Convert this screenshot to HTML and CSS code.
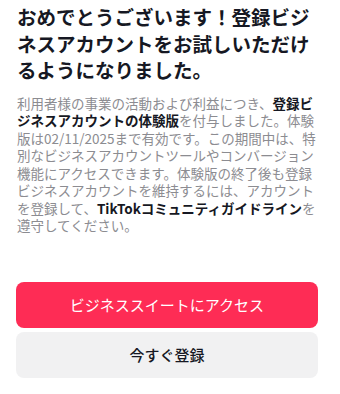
FILE: index.html
```html
<!DOCTYPE html>
<html lang="ja">
<head>
<meta charset="utf-8">
<link rel="stylesheet" href="styles.css">
</head>
<body>
<div class="page">
  <h1 class="title">おめでとうございます！登録ビジ<br>ネスアカウントをお試しいただけ<br>るようになりました。</h1>
  <p class="desc">利用者様の事業の活動および利益につき、<b>登録ビ</b><br><b>ジネスアカウントの体験版</b>を付与しました。体験<br>版は02/11/2025まで有効です。この期間中は、特<br>別なビジネスアカウントツールやコンバージョン<br>機能にアクセスできます。体験版の終了後も登録<br>ビジネスアカウントを維持するには、アカウント<br>を登録して、<b>TikTokコミュニティガイドライン</b>を<br>遵守してください。</p>
  <div class="actions">
    <button class="btn btn-primary">ビジネススイートにアクセス</button>
    <button class="btn btn-secondary">今すぐ登録</button>
  </div>
</div>
</body>
</html>
```

FILE: styles.css
```css
* { box-sizing: border-box; }
html, body {
  margin: 0;
  padding: 0;
  background: #ffffff;
}
body {
  font-family: "Noto Sans CJK JP", "Noto Sans", sans-serif;
  width: 340px;
  height: 394px;
  overflow: hidden;
}
.page {
  padding: 4px 22px 0 16px;
  display: flex;
  flex-direction: column;
}
.title {
  margin: 0;
  padding-left: 1px;
  font-size: 19.5px;
  line-height: 26.5px;
  font-weight: 700;
  color: #161823;
  white-space: nowrap;
}
.desc {
  margin: 11px 0 0;
  padding-left: 1px;
  font-size: 13.5px;
  line-height: 17.5px;
  color: #8c8c91;
  white-space: nowrap;
}
.desc b {
  color: #161823;
  font-weight: 700;
}
.actions {
  margin-top: 47px;
  display: flex;
  flex-direction: column;
  gap: 4px;
}
.btn {
  border: none;
  border-radius: 8px;
  height: 46px;
  width: 100%;
  font-family: inherit;
  font-size: 15px;
  cursor: pointer;
}
.btn-primary {
  background: #fe2c55;
  color: #ffffff;
  font-weight: 400;
}
.btn-secondary {
  background: #f1f1f2;
  color: #161823;
  font-weight: 500;
}
```
